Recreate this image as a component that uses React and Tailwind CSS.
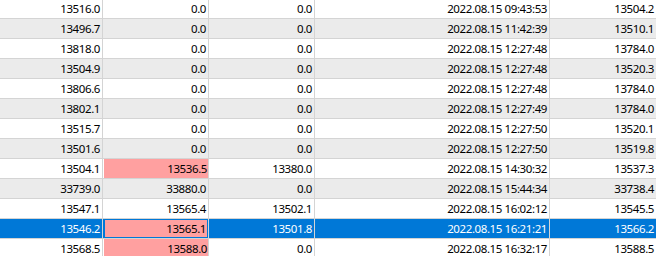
import React from "react";

const rows = [
  ["13516.0", "0.0", "0.0", "2022.08.15 09:43:53", "13504.2"],
  ["13496.7", "0.0", "0.0", "2022.08.15 11:42:39", "13510.1"],
  ["13818.0", "0.0", "0.0", "2022.08.15 12:27:48", "13784.0"],
  ["13504.9", "0.0", "0.0", "2022.08.15 12:27:48", "13520.3"],
  ["13806.6", "0.0", "0.0", "2022.08.15 12:27:48", "13784.0"],
  ["13802.1", "0.0", "0.0", "2022.08.15 12:27:49", "13784.0"],
  ["13515.7", "0.0", "0.0", "2022.08.15 12:27:50", "13520.1"],
  ["13501.6", "0.0", "0.0", "2022.08.15 12:27:50", "13519.8"],
  ["13504.1", "13536.5", "13380.0", "2022.08.15 14:30:32", "13537.3", "pink"],
  ["33739.0", "33880.0", "0.0", "2022.08.15 15:44:34", "33738.4"],
  ["13547.1", "13565.4", "13502.1", "2022.08.15 16:02:12", "13545.5"],
  ["13546.2", "13565.1", "13501.8", "2022.08.15 16:21:21", "13566.2", "selected"],
  ["13568.5", "13588.0", "0.0", "2022.08.15 16:32:17", "13588.5", "pink"],
];

const widths = ["w-[103px]", "w-[106px]", "w-[106px]", "w-[235px]", "w-[107px]"];

function Row({ data, index }) {
  const [a, b, c, d, e, flag] = data;
  const selected = flag === "selected";
  const pink = flag === "pink" || selected;
  const rowBg = selected
    ? "bg-[#0078d7] text-white"
    : index % 2 === 1
    ? "bg-[#ebebeb] text-black"
    : "bg-white text-black";

  return (
    <div className={`flex h-[20px] shrink-0 border-b border-[#d4d4d4] ${rowBg}`}>
      {[a, b, c, d, e].map((val, i) => (
        <div
          key={i}
          className={`${widths[i]} shrink-0 h-full border-r border-[#d4d4d4] flex`}
        >
          {i === 1 && pink ? (
            <div
              className={`flex-1 ml-px flex items-center justify-end pr-[1px] bg-[#ffa0a0] text-black ${
                selected ? "border border-[#0078d7]" : ""
              }`}
            >
              {val}
            </div>
          ) : (
            <div className="flex-1 flex items-center justify-end pr-[2px]">{val}</div>
          )}
        </div>
      ))}
    </div>
  );
}

export default function App() {
  return (
    <div
      className="w-[656px] h-[256px] overflow-hidden bg-white text-[11.5px] leading-none tracking-[-0.4px]"
      style={{ fontFamily: '"Noto Sans", "Open Sans", sans-serif' }}
    >
      <div className="-mt-px flex flex-col">
        {rows.map((r, i) => (
          <Row key={i} data={r} index={i} />
        ))}
      </div>
    </div>
  );
}
